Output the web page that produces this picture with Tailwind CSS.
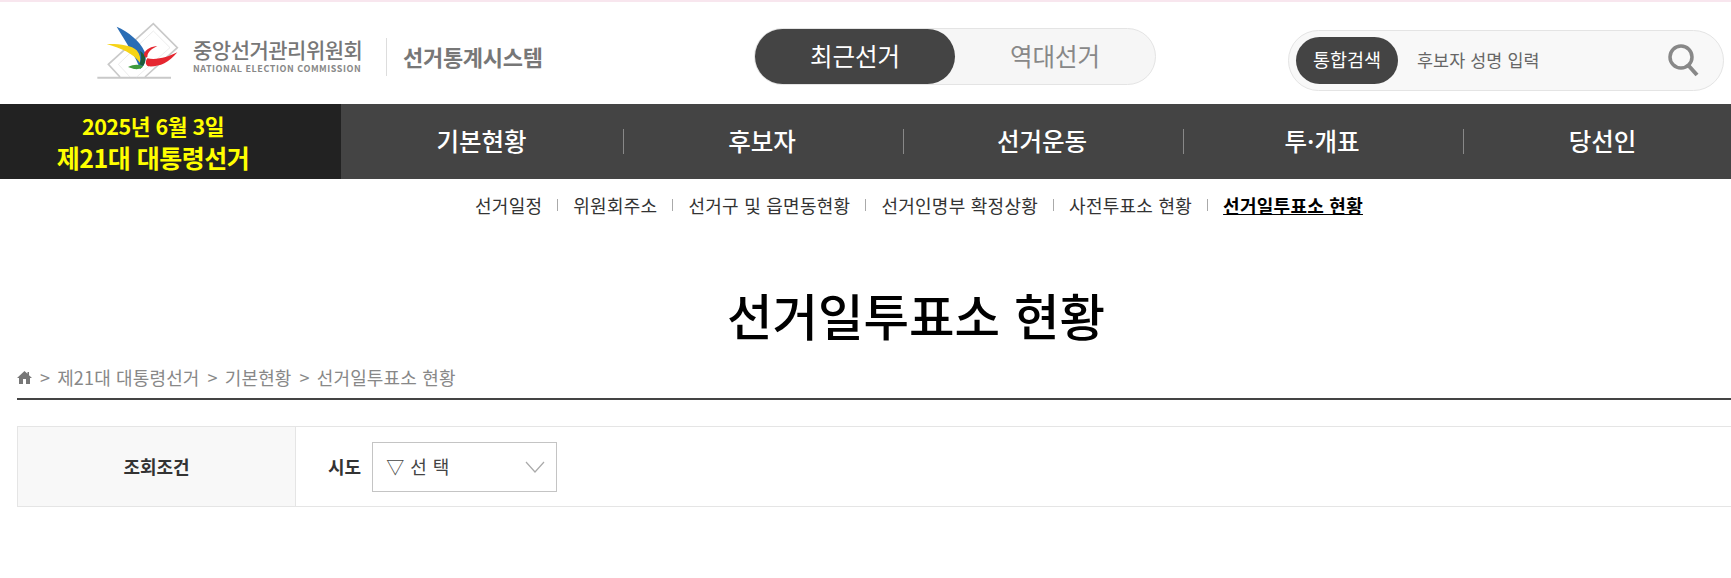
<!DOCTYPE html>
<html lang="ko">
<head>
    <meta charset="UTF-8">
    <meta name="viewport" content="width=device-width, initial-scale=1.0">
    <title>선거통계시스템</title>
    <script src="https://cdn.jsdelivr.net/npm/@tailwindcss/browser@4"></script>
</head>
<body class="bg-white overflow-hidden font-['Noto_Sans_CJK_KR','Noto_Sans',sans-serif] text-[#333]">
<div class="w-[1832px]">
    <!-- 상단 헤더 -->
    <header class="h-[104px] border-t-2 border-[#f8e6ee] pt-[7px] flex items-center">
        <div class="w-[754px] shrink-0 pl-[95px] flex items-center">
            <svg class="w-[84px] h-[62px] shrink-0 mb-[10px]" viewBox="15 20 252 186">
                <path d="M22 190H243" stroke="#c9c9c9" stroke-width="6" fill="none"/>
                <path d="M90 188L55 150L190 28L262 100L165 188" stroke="#c9c9c9" stroke-width="5" fill="none"/>
                <path d="M120 188L85 150L190 50L240 100L140 188" stroke="#e2e2e2" stroke-width="2" fill="none"/>
                <path d="M80 37C115 52 150 80 164 112C172 132 165 150 150 165C140 130 105 80 80 37Z" fill="#2a6db5"/>
                <path d="M50 89C85 88 125 92 140 108C150 120 152 132 150 145C130 118 95 102 50 89Z" fill="#f7d417"/>
                <path d="M262 114C235 148 205 158 175 156C165 152 166 140 172 132C200 138 235 128 262 114Z" fill="#e52630"/>
                <path d="M202 96C185 96 168 104 162 118C160 128 166 132 172 128C172 112 188 102 202 96Z" fill="#e52630"/>
                <path d="M114 158C130 150 145 150 158 155C160 160 150 166 132 164Z" fill="#3f9b3c"/>
                <path d="M150 110C165 120 172 135 160 155L148 150C155 135 155 125 150 110Z" fill="#1d5c3a"/>
            </svg>
            <div class="ml-[14px] w-[168px] mb-[3px]">
                <div class="text-[21px] leading-[24px] font-medium text-[#777] tracking-[-0.5px] whitespace-nowrap">중앙선거관리위원회</div>
                <div class="mt-[3px] text-[9px] leading-[10px] font-bold text-[#888] tracking-[0.55px] whitespace-nowrap">NATIONAL ELECTION COMMISSION</div>
            </div>
            <div class="w-px h-[38px] bg-[#ddd] ml-[25px] mr-[16px]"></div>
            <div class="text-[22px] font-bold text-[#777] tracking-[-0.3px] whitespace-nowrap">선거통계시스템</div>
        </div>
        <div class="w-[402px] h-[57px] shrink-0 flex items-center rounded-full bg-[#f6f6f6] border border-[#e4e4e4] text-[24.5px]">
            <div class="w-[200px] h-[55px] rounded-full bg-[#444] text-white flex items-center justify-center">최근선거</div>
            <div class="flex-1 text-center text-[#888]">역대선거</div>
        </div>
        <div class="ml-[132px] w-[436px] h-[61px] shrink-0 flex items-center rounded-full bg-[#f8f8f8] border border-[#e4e4e4] pl-[7px] pr-[23px] mt-[7px]">
            <div class="w-[102px] h-[47px] rounded-full bg-[#444] text-white text-[18.5px] flex items-center justify-center">통합검색</div>
            <div class="ml-[19px] text-[17.4px] tracking-[0.1px] text-[#666] flex-1">후보자 성명 입력</div>
            <svg class="w-[34px] h-[34px]" viewBox="0 0 34 34" fill="none" stroke="#888">
                <circle cx="15" cy="14" r="11" stroke-width="3.5"/>
                <path d="M22 22L31 32" stroke-width="4"/>
            </svg>
        </div>
    </header>

    <!-- 메인 메뉴 -->
    <nav class="h-[75px] flex bg-[#444] text-white">
        <div class="w-[341px] shrink-0 bg-[#222] text-[#ff0] font-bold text-center pr-[35px]">
            <div class="text-[21.5px] leading-[26px] pt-[9px] tracking-[-0.5px]">2025년 6월 3일</div>
            <div class="text-[25px] leading-[32px] pt-[2px] tracking-[-0.5px]">제21대 대통령선거</div>
        </div>
        <div class="w-[283px] pr-[1px] flex items-center justify-center text-[24.5px] font-medium border-r border-[#888] my-[25px]">기본현황</div>
        <div class="w-[280px] pr-[3px] flex items-center justify-center text-[24.5px] font-medium border-r border-[#888] my-[25px]">후보자</div>
        <div class="w-[280px] pr-[3px] flex items-center justify-center text-[24.5px] font-medium border-r border-[#888] my-[25px]">선거운동</div>
        <div class="w-[280px] pr-[3px] flex items-center justify-center text-[24.5px] font-medium border-r border-[#888] my-[25px]">투·개표</div>
        <div class="w-[280px] pr-[3px] flex items-center justify-center text-[24.5px] font-medium my-[25px]">당선인</div>
    </nav>

    <!-- 서브 메뉴 -->
    <div class="pl-[475px] h-[54px] pb-[2px] flex items-center text-[18px] tracking-[0.26px] text-[#333] whitespace-nowrap">
        <span>선거일정</span>
        <span class="w-px h-[12px] bg-[#aaa] mx-[15px]"></span>
        <span>위원회주소</span>
        <span class="w-px h-[12px] bg-[#aaa] mx-[15px]"></span>
        <span>선거구 및 읍면동현황</span>
        <span class="w-px h-[12px] bg-[#aaa] mx-[15px]"></span>
        <span>선거인명부 확정상황</span>
        <span class="w-px h-[12px] bg-[#aaa] mx-[15px]"></span>
        <span>사전투표소 현황</span>
        <span class="w-px h-[12px] bg-[#aaa] mx-[15px]"></span>
        <span class="font-bold text-black underline">선거일투표소 현황</span>
    </div>

    <h1 class="mt-[44px] text-center text-[49.5px] leading-[76px] font-medium text-black">선거일투표소 현황</h1>

    <!-- 경로 -->
    <div class="mx-[17px] mt-[7px] h-[40px] pb-[3px] border-b-2 border-[#444] flex items-center text-[18px] tracking-[0.15px] text-[#888] whitespace-nowrap">
        <svg class="w-[15px] h-[15px] mr-[8px]" viewBox="0 0 15 15" fill="#777"><path d="M7.5 1L0 8H2V14H13V8H15L12 5.2V2H10.5V3.8ZM6 9H9V14H6Z" fill-rule="evenodd"/></svg>
        <span class="mr-[7px]">&gt;</span><span>제21대 대통령선거</span>
        <span class="ml-[8px] mr-[7px]">&gt;</span><span>기본현황</span>
        <span class="ml-[8px] mr-[7px]">&gt;</span><span>선거일투표소 현황</span>
    </div>

    <!-- 조회조건 -->
    <div class="mx-[17px] mt-[26px] h-[81px] flex border border-[#e5e5e5]">
        <div class="w-[278px] bg-[#f8f8f8] border-r border-[#e5e5e5] flex items-center justify-center text-[18px] font-bold text-[#333]">조회조건</div>
        <div class="flex items-center pl-[32px]">
            <span class="text-[18px] font-bold text-[#333]">시도</span>
            <div class="ml-[11px] w-[185px] h-[50px] border border-[#c4c4c4] flex items-center justify-between pl-[13px] pr-[11px] text-[18px] tracking-[0.5px] text-[#444]">
                <span>▽ 선 택</span>
                <svg class="w-[20px] h-[12px]" viewBox="0 0 20 12" fill="none" stroke="#aaa" stroke-width="1.2"><path d="M1 1L10 11L19 1"/></svg>
            </div>
        </div>
    </div>
</div>
</body>
</html>
